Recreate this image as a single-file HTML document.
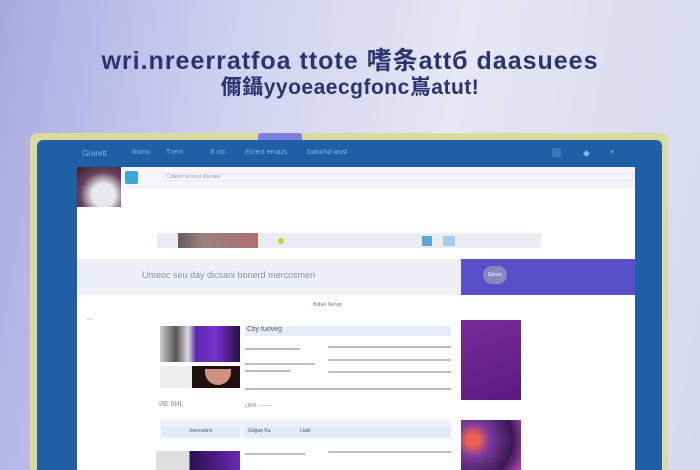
<!DOCTYPE html><html><head><meta charset="utf-8"><style>
*{margin:0;padding:0;box-sizing:border-box}
html,body{width:700px;height:470px;overflow:hidden}
body{position:relative;font-family:"Liberation Sans","Noto Sans CJK SC",sans-serif;background:linear-gradient(100deg,#a9a9e2 0%,#cfd0ee 30%,#e6e6f4 60%,#d6d8ee 100%)}
.t{position:absolute;left:0;width:700px;text-align:center;color:#2b3372;font-weight:bold;letter-spacing:0.5px}
.frame{position:absolute;left:30px;top:133px;width:638px;height:350px;background:#d9dc9c;border-radius:8px}
.tab{position:absolute;left:258px;top:133px;width:44px;height:7px;background:#7a7fe0;border-radius:3px 3px 0 0}
.blue{position:absolute;left:37px;top:140px;width:625px;height:340px;background:#1f5fa6;border-radius:6px}
.nav{position:absolute;top:149px;font-size:7px;color:#8fb0dc}
.white{position:absolute;left:77px;top:167px;width:558px;height:310px;background:#fff}
.a{position:absolute}
.line{position:absolute;height:2px;background:#b8bccc}
</style></head><body>
<div class="t" style="top:41px;font-size:25px;letter-spacing:1px">wri.nreerratfoa ttote 嗜条attб daasuees</div>
<div class="t" style="top:71px;font-size:21px">儞鑷yyoeaecgfonc嶌atut!</div>
<div class="frame"></div><div class="tab"></div><div class="blue"></div>
<div class="nav" style="left:82px;font-size:8px">Grarett</div>
<div class="nav" style="left:132px">Rоmo</div>
<div class="nav" style="left:166px">Ттеm</div>
<div class="nav" style="left:210px">Л ctc</div>
<div class="nav" style="left:245px">Ecrect emazs</div>
<div class="nav" style="left:306px">Joaorhd wsst</div>
<div class="a" style="left:552px;top:148px;width:9px;height:9px;border-radius:2px;background:#3f78b8"></div>
<div class="nav" style="left:583px">◆</div><div class="nav" style="left:610px">≡</div>
<div class="white"></div>
<div class="a" style="left:77px;top:167px;width:558px;height:22px;background:#f3f5fa"></div>
<div class="a" style="left:77px;top:167px;width:44px;height:40px;background:radial-gradient(circle at 60% 70%,#e8e8ee 30%,#6a4060 60%,#3a2030)"></div>
<div class="a" style="left:125px;top:171px;width:13px;height:13px;background:#3aa8d8;border-radius:2px"></div>
<div class="a" style="left:163px;top:173px;width:470px;height:8px;border:1px solid #e6e8f0;font-size:5px;color:#999;padding-left:3px">Cdtenrt tenocet dosotee</div>
<div class="a" style="left:157px;top:233px;width:384px;height:15px;background:#e9ecf3"></div>
<div class="a" style="left:178px;top:233px;width:80px;height:15px;background:linear-gradient(90deg,#6a5a5a,#9a8080 30%,#b07070)"></div>
<div class="a" style="left:278px;top:238px;width:6px;height:6px;background:#c8d030;border-radius:50%"></div>
<div class="a" style="left:422px;top:236px;width:10px;height:10px;background:#5aa8d8"></div>
<div class="a" style="left:443px;top:236px;width:12px;height:10px;background:#a8cce8"></div>
<div class="a" style="left:77px;top:259px;width:384px;height:36px;background:#eef0f7"></div>
<div class="a" style="left:142px;top:270px;font-size:9px;color:#8a8ca8">Umeoc seu day dicsani bonerd mercosmen</div>
<div class="a" style="left:461px;top:259px;width:174px;height:36px;background:#5a4fc8"></div>
<div class="a" style="left:483px;top:266px;width:24px;height:18px;border-radius:9px;background:#8a84c0;font-size:5px;color:#fff;text-align:center;line-height:18px">Gensc</div>
<div class="a" style="left:313px;top:302px;font-size:5px;color:#6a7aa8">Bdbet Nenigt</div>
<div class="a" style="left:87px;top:316px;font-size:4px;color:#aaa">e.s</div>
<div class="a" style="left:160px;top:326px;width:80px;height:36px;background:linear-gradient(90deg,#ccc,#555 20%,#ddd 35%,#5a2aa8 45%,#7a30d0 70%,#2a1040)"></div>
<div class="a" style="left:160px;top:366px;width:80px;height:22px;background:linear-gradient(90deg,#eee 40%,#201010 40%)"></div>
<div class="a" style="left:205px;top:369px;width:26px;height:16px;border-radius:0 0 13px 13px;background:#d09080"></div>
<div class="a" style="left:245px;top:326px;width:206px;height:10px;background:#e6edf7;font-size:7px;color:#556;padding-left:2px">Ctiy tuoveg</div>
<div class="line" style="left:245px;top:348px;width:55px"></div>
<div class="line" style="left:328px;top:346px;width:123px"></div>
<div class="line" style="left:328px;top:359px;width:123px"></div>
<div class="line" style="left:245px;top:363px;width:70px"></div>
<div class="line" style="left:245px;top:370px;width:45px"></div>
<div class="line" style="left:328px;top:371px;width:123px"></div>
<div class="line" style="left:245px;top:388px;width:206px"></div>
<div class="a" style="left:159px;top:401px;font-size:7px;color:#888">ИЕ 6ИL</div>
<div class="a" style="left:245px;top:403px;font-size:5px;color:#888">IJИИ ---------</div>
<div class="a" style="left:461px;top:320px;width:60px;height:80px;background:linear-gradient(160deg,#7a2a9a,#5a1a80)"></div>
<div class="a" style="left:160px;top:419px;width:291px;height:20px;background:#eef3fa"></div>
<div class="a" style="left:162px;top:426px;width:78px;height:11px;background:#e2eaf6;font-size:5px;color:#556;text-align:center;line-height:11px">inenoatinn</div>
<div class="a" style="left:245px;top:426px;width:206px;height:11px;background:#e2eaf6;font-size:5px;color:#556;padding-left:3px;line-height:11px">Gdgue Ka &nbsp;&nbsp;&nbsp;&nbsp;&nbsp;&nbsp;&nbsp;&nbsp;&nbsp;&nbsp;&nbsp;&nbsp;&nbsp;&nbsp;&nbsp;&nbsp;&nbsp;&nbsp;&nbsp;&nbsp;Ltabl</div>
<div class="a" style="left:156px;top:451px;width:84px;height:19px;background:linear-gradient(90deg,#ddd 40%,#2a1050 40%,#6a2ab0)"></div>
<div class="line" style="left:245px;top:453px;width:60px"></div>
<div class="line" style="left:328px;top:451px;width:123px"></div>
<div class="a" style="left:461px;top:420px;width:60px;height:50px;background:radial-gradient(circle at 20% 40%,#f06050 10%,#7a3aa0 30%,#3a1a50 70%,#c040c0)"></div>
</body></html>
